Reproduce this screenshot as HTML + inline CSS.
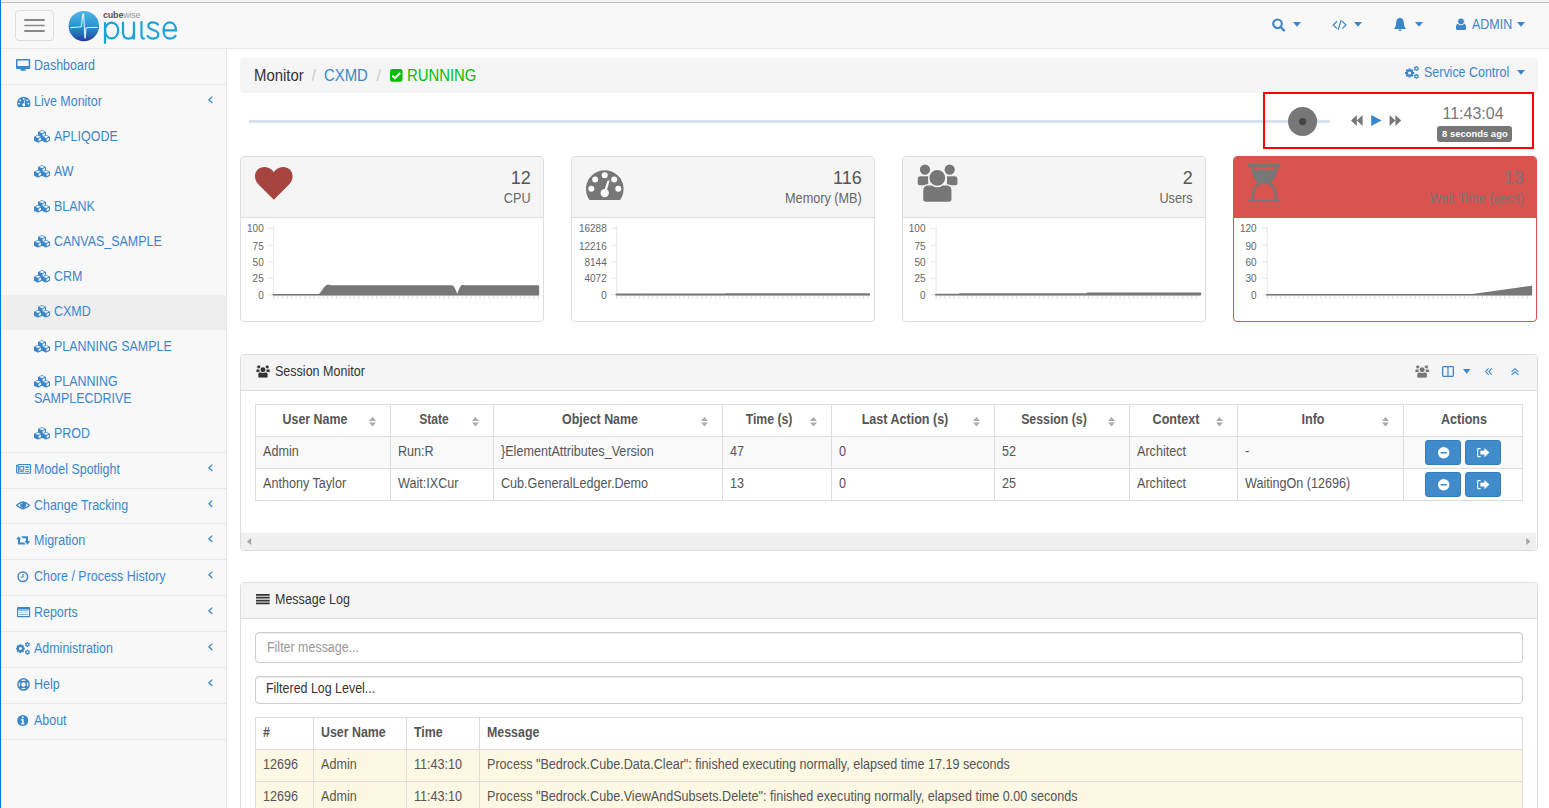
<!DOCTYPE html>
<html><head><meta charset="utf-8">
<style>
*{box-sizing:border-box}
html,body{margin:0;padding:0}
body{width:1549px;height:808px;overflow:hidden;position:relative;background:#fff;font-family:"Liberation Sans",sans-serif;font-size:14px;color:#333}
.a{position:absolute}
.t{position:absolute;white-space:nowrap;line-height:20px;transform-origin:0 50%}
.tr{transform-origin:100% 50%}
.tc{transform-origin:50% 50%}
svg{display:block;position:absolute;overflow:visible}
.s89{transform:scaleX(.89)}
.s93{transform:scaleX(.93)}
#hdr{left:0;top:0;width:1549px;height:49px;background:#f8f8f8;border-bottom:1px solid #e7e7e7}
#line0{left:0;top:0;width:1549px;height:1px;background:#f0f0f0}
#line2{left:0;top:2px;width:1549px;height:1px;background:#b9b9b9}
#line3{left:0;top:3px;width:1549px;height:1px;background:#fdfdfd}
#blue{left:0;top:0;width:1px;height:808px;background:#0078d7;z-index:10}
#burger{left:15px;top:10px;width:39px;height:31px;border:1px solid #ddd;border-radius:4px}
#burger i{position:absolute;left:7px;width:20px;height:2px;background:#888;border-radius:1px}
.bl{color:#3b86c8}
</style></head>
<body>
<div class="a" id="hdr"></div>
<div class="a" id="line0"></div>
<div class="a" id="line2"></div>
<div class="a" id="line3"></div>
<div class="a" id="blue"></div>
<div class="a" id="burger"></div><svg style="left:23.5px;top:18px" width="21" height="15" viewBox="0 0 21 15"><path d="M1,2 H20 M1,13 H20" stroke="#888" stroke-width="2" stroke-linecap="round" fill="none"/><path d="M1,7.5 H20" stroke="#888" stroke-width="1.6" stroke-linecap="round" fill="none"/></svg>

<!-- logo -->
<svg style="left:68px;top:10px" width="32" height="32" viewBox="0 0 32 32">
<defs><linearGradient id="lg" x1="0" y1="0" x2="0" y2="1">
<stop offset="0" stop-color="#52b6e6"/><stop offset=".45" stop-color="#2a9ad6"/><stop offset=".75" stop-color="#2470b8"/><stop offset="1" stop-color="#24399a"/></linearGradient></defs>
<circle cx="15.8" cy="16.1" r="15.2" fill="url(#lg)"/>
<path d="M2.3,17.6 C6,17.6 10,17.4 13.2,16.8 L15,3.8 L15.6,3.8 L16.3,16 L16.8,28 L17.3,28 L17.9,18.2 C19,16.9 22,17.8 29.5,17.4" fill="none" stroke="#fff" stroke-width="1.1" stroke-linejoin="round" opacity=".85"/>
</svg>
<div class="t" style="left:103px;top:8.5px;font-size:9px;line-height:12px;letter-spacing:-.2px"><b style="color:#555">cube</b><span style="color:#999">wise</span></div>
<svg style="left:100px;top:18px" width="82" height="28" viewBox="0 0 82 28">
<g fill="none" stroke="#1ba2da" stroke-width="2.2" stroke-linecap="round">
<path d="M5,5 L5,25"/>
<ellipse cx="11.6" cy="12.5" rx="6.6" ry="7.9"/>
<path d="M23,4.6 L23,14 C23,18.5 25.5,20.6 28.5,20.6 C31.5,20.6 34,18.5 34,14 L34,4.6 M34,14 L34,20.6"/>
<path d="M41.5,4 L41.5,17.5 C41.5,19.8 42.4,20.6 44,20.6"/>
<path d="M58,6.5 C56.8,5 55,4.4 53,4.4 C50,4.4 48.3,6 48.3,8 C48.3,13 58.3,11 58.3,16.3 C58.3,19 56,20.6 53,20.6 C50.5,20.6 48.6,19.6 47.6,18"/>
<path d="M63.6,12.4 L76,12.4 C76,7.5 73.5,4.4 69.8,4.4 C66,4.4 63.5,7.8 63.5,12.5 C63.5,17.5 66,20.6 70,20.6 C72.5,20.6 74.2,19.5 75.5,18"/>
</g></svg>

<!-- header right -->
<svg style="left:1271px;top:18px" width="15" height="14" viewBox="0 0 15 14"><circle cx="6.5" cy="5.8" r="4.3" fill="none" stroke="#3b86c8" stroke-width="2.1"/><path d="M9.6,9 L13,12.4" stroke="#3b86c8" stroke-width="2.3" stroke-linecap="round"/></svg>
<svg style="left:1293px;top:22px" width="8" height="5" viewBox="0 0 8 5"><path d="M0,0H8L4,4.8Z" fill="#3b86c8"/></svg>
<svg style="left:1332px;top:20px" width="15" height="10" viewBox="0 0 15 10"><path d="M5,1.3 L1.2,5 L5,8.6 M10.2,1.3 L14,5 L10.2,8.6 M9.2,0 L6.2,9.7" fill="none" stroke="#3b86c8" stroke-width="1.2"/></svg>
<svg style="left:1354px;top:22px" width="8" height="5" viewBox="0 0 8 5"><path d="M0,0H8L4,4.8Z" fill="#3b86c8"/></svg>
<svg style="left:1393px;top:17px" width="14" height="15" viewBox="0 0 14 15"><path d="M7,0.8 C4.6,1.2 3.2,3 3.2,5.6 C3.2,8.8 2.2,10.6 0.8,11.9 L13.2,11.9 C11.8,10.6 10.8,8.8 10.8,5.6 C10.8,3 9.4,1.2 7,0.8Z" fill="#3b86c8"/><path d="M5.4,12.5 a1.6,1.6 0 0 0 3.2,0Z" fill="#3b86c8"/></svg>
<svg style="left:1415px;top:22px" width="8" height="5" viewBox="0 0 8 5"><path d="M0,0H8L4,4.8Z" fill="#3b86c8"/></svg>
<svg style="left:1455px;top:18px" width="12" height="13" viewBox="0 0 12 13"><path d="M1,8.2 Q1,5.9 3,5.9 H9 Q11,5.9 11,8.2 V10.6 Q11,11.9 9.7,11.9 H2.3 Q1,11.9 1,10.6Z" fill="#3b86c8"/><circle cx="6" cy="3.4" r="3.5" fill="#3b86c8" stroke="#f8f8f8" stroke-width="1"/></svg>
<div class="t bl s89" style="left:1472px;top:14px">ADMIN</div>
<svg style="left:1517px;top:22px" width="8" height="5" viewBox="0 0 8 5"><path d="M0,0H8L4,4.8Z" fill="#3b86c8"/></svg>

<!--SIDEBAR-->
<div class="a" style="left:1px;top:49px;width:226px;height:759px;background:#f8f8f8;border-right:1px solid #e7e7e7"></div>
<div class="a" style="left:1px;top:84px;width:225px;height:1px;background:#e7e7e7"></div>
<div class="a" style="left:1px;top:452px;width:225px;height:1px;background:#e7e7e7"></div>
<div class="a" style="left:1px;top:488px;width:225px;height:1px;background:#e7e7e7"></div>
<div class="a" style="left:1px;top:523px;width:225px;height:1px;background:#e7e7e7"></div>
<div class="a" style="left:1px;top:559px;width:225px;height:1px;background:#e7e7e7"></div>
<div class="a" style="left:1px;top:595px;width:225px;height:1px;background:#e7e7e7"></div>
<div class="a" style="left:1px;top:631px;width:225px;height:1px;background:#e7e7e7"></div>
<div class="a" style="left:1px;top:667px;width:225px;height:1px;background:#e7e7e7"></div>
<div class="a" style="left:1px;top:703px;width:225px;height:1px;background:#e7e7e7"></div>
<div class="a" style="left:1px;top:739px;width:225px;height:1px;background:#e7e7e7"></div>
<div class="a" style="left:1px;top:295px;width:225px;height:35px;background:#eee"></div>
<svg width="0" height="0" style="position:absolute"><defs>
<symbol id="cube" viewBox="0 0 8 8"><path d="M0,2 L4,0 L8,2 L8,6 L4,8 L0,6Z" fill="#3b86c8"/><path d="M1.3,2 L4,0.8 L6.7,2 L4,3.2Z M4.6,4 L7,3 L7,5.4 L4.6,6.6Z" fill="#fff" opacity=".9"/></symbol>
<symbol id="cubes" viewBox="0 0 16 13"><use href="#cube" x="4" y="0" width="8" height="8"/><use href="#cube" x="0" y="4.7" width="8" height="8"/><use href="#cube" x="8" y="4.7" width="8" height="8"/></symbol>
<symbol id="chev" viewBox="0 0 5 8"><path d="M4.3,0.6 L0.9,3.8 L4.3,7" fill="none" stroke="#3b86c8" stroke-width="1.25"/></symbol>
</defs></svg>
<svg style="left:15.8px;top:59px" width="14.2" height="12" viewBox="0 0 14.2 12"><path d="M1,0 H13.2 Q14.2,0 14.2,1 V9 Q14.2,10 13.2,10 H1 Q0,10 0,9 V1 Q0,0 1,0Z M1.5,1.5 V7 H12.7 V1.5Z" fill="#3b86c8" fill-rule="evenodd"/><path d="M4.8,10 H9.4 L9.8,11.8 H4.4Z" fill="#3b86c8"/></svg>
<div class="t bl s89" style="left:34px;top:55px">Dashboard</div>
<svg style="left:16.5px;top:97px" width="13.5" height="10" viewBox="0 0 13.5 10"><path d="M1,10 A6.75,6.75 0 1 1 12.5,10Z" fill="#3b86c8"/><g fill="#fff"><circle cx="6.75" cy="1.9" r=".9"/><circle cx="3.3" cy="3.3" r=".9"/><circle cx="10.2" cy="3.3" r=".9"/><circle cx="2" cy="6.6" r=".9"/><circle cx="11.5" cy="6.6" r=".9"/><circle cx="6.75" cy="8" r="1.4"/><path d="M6.2,8 L7.5,3 L8,3.1 L7.3,8Z"/></g></svg>
<div class="t bl s89" style="left:34px;top:91px">Live Monitor</div>
<svg style="left:208px;top:95.5px" width="5" height="8"><use href="#chev"/></svg>
<svg style="left:34.3px;top:130px" width="16" height="13"><use href="#cubes"/></svg>
<div class="t bl s89" style="left:54px;top:126px">APLIQODE</div>
<svg style="left:34.3px;top:165px" width="16" height="13"><use href="#cubes"/></svg>
<div class="t bl s89" style="left:54px;top:161px">AW</div>
<svg style="left:34.3px;top:200px" width="16" height="13"><use href="#cubes"/></svg>
<div class="t bl s89" style="left:54px;top:196px">BLANK</div>
<svg style="left:34.3px;top:235px" width="16" height="13"><use href="#cubes"/></svg>
<div class="t bl s89" style="left:54px;top:231px">CANVAS_SAMPLE</div>
<svg style="left:34.3px;top:270px" width="16" height="13"><use href="#cubes"/></svg>
<div class="t bl s89" style="left:54px;top:266px">CRM</div>
<svg style="left:34.3px;top:305px" width="16" height="13"><use href="#cubes"/></svg>
<div class="t bl s89" style="left:54px;top:301px">CXMD</div>
<svg style="left:34.3px;top:340px" width="16" height="13"><use href="#cubes"/></svg>
<div class="t bl s89" style="left:54px;top:336px">PLANNING SAMPLE</div>
<svg style="left:34.3px;top:375px" width="16" height="13"><use href="#cubes"/></svg>
<div class="t bl s89" style="left:54px;top:371px">PLANNING</div>
<svg style="left:34.3px;top:427px" width="16" height="13"><use href="#cubes"/></svg>
<div class="t bl s89" style="left:54px;top:423px">PROD</div>
<div class="t bl s89" style="left:34px;top:388px">SAMPLECDRIVE</div>
<svg style="left:15.8px;top:463.9px" width="15" height="10" viewBox="0 0 15 10"><g fill="none" stroke="#3b86c8" stroke-width="1.1"><path d="M2.35,9.25 H13.9 Q14.4,9.25 14.4,8.75 V1.05 Q14.4,.55 13.9,.55 H2.35 V9.25 Q.55,9.25 .55,8.5 V1.6 H2.35"/><rect x="3.85" y="2.65" width="3.9" height="3.3"/></g><path d="M9.3,2.3 H13.1 V3.9 H9.3Z M9.3,4.9 H13.1 V5.9 H9.3Z M3.5,6.9 H7.8 V7.9 H3.5Z M9.3,6.9 H13.1 V7.9 H9.3Z" fill="#3b86c8" opacity=".85"/></svg>
<div class="t bl s89" style="left:34px;top:459px">Model Spotlight</div>
<svg style="left:208px;top:463.5px" width="5" height="8"><use href="#chev"/></svg>
<svg style="left:16px;top:501.3px" width="14" height="8.6" viewBox="0 0 14 8.6"><path d="M.7,4.3 Q7,-2.6 13.3,4.3 Q7,11.2 .7,4.3Z" fill="none" stroke="#3b86c8" stroke-width="1.3"/><circle cx="7.1" cy="3.8" r="3.1" fill="#3b86c8"/><path d="M5.2,3.4 Q5.4,2.2 6.4,1.9" stroke="#fff" stroke-width=".8" fill="none" opacity=".8"/></svg>
<div class="t bl s89" style="left:34px;top:495px">Change Tracking</div>
<svg style="left:208px;top:499.5px" width="5" height="8"><use href="#chev"/></svg>
<svg style="left:15.9px;top:536.3px" width="14.2" height="8.8" viewBox="0 0 14.2 8.8"><path d="M.1,3.3 L2.75,.4 L5.3,3.3 H4 V6.6 H8.2 L9.6,8.6 H2 V3.3Z M5.2,.3 H12 V5.1 H14.1 L11.4,8.7 L8.6,5.1 H10 V2.3 H6.8Z" fill="#3b86c8"/></svg>
<div class="t bl s89" style="left:34px;top:530px">Migration</div>
<svg style="left:208px;top:534.5px" width="5" height="8"><use href="#chev"/></svg>
<svg style="left:17.4px;top:570.6px" width="11.6" height="11.6" viewBox="0 0 11.6 11.6"><circle cx="5.85" cy="5.75" r="4.8" fill="none" stroke="#3b86c8" stroke-width="1.5"/><path d="M6.05,3.1 V6.05 H3.6" fill="none" stroke="#3b86c8" stroke-width="1.1"/></svg>
<div class="t bl s89" style="left:34px;top:566px">Chore / Process History</div>
<svg style="left:208px;top:570.5px" width="5" height="8"><use href="#chev"/></svg>
<svg style="left:16.6px;top:607px" width="13.2" height="10.2" viewBox="0 0 13.2 10.2"><path d="M.9,0 H12.3 Q13.2,0 13.2,.9 V9.3 Q13.2,10.2 12.3,10.2 H.9 Q0,10.2 0,9.3 V.9 Q0,0 .9,0Z M1.1,2.5 V9.1 H12.1 V2.5Z" fill="#3b86c8" fill-rule="evenodd"/><path d="M1.7,3.1 H11.4 V3.9 H1.7Z M1.7,4.9 H11.4 V5.6 H1.7Z M1.7,7.1 H11.4 V7.9 H1.7Z" fill="#3b86c8" opacity=".6"/></svg>
<div class="t bl s89" style="left:34px;top:602px">Reports</div>
<svg style="left:208px;top:606.5px" width="5" height="8"><use href="#chev"/></svg>
<svg style="left:16px;top:642px" width="14" height="13" viewBox="0 0 14 13"><path d="M3.42,3.19 L3.44,2.20 L5.36,2.20 L5.38,3.19 L6.12,3.50 L6.83,2.81 L8.19,4.17 L7.50,4.88 L7.81,5.62 L8.80,5.64 L8.80,7.56 L7.81,7.58 L7.50,8.32 L8.19,9.03 L6.83,10.39 L6.12,9.70 L5.38,10.01 L5.36,11.00 L3.44,11.00 L3.42,10.01 L2.68,9.70 L1.97,10.39 L0.61,9.03 L1.30,8.32 L0.99,7.58 L0.00,7.56 L0.00,5.64 L0.99,5.62 L1.30,4.88 L0.61,4.17 L1.97,2.81 L2.68,3.50Z M5.90,6.6 A1.5,1.5 0 1 0 2.90,6.6 A1.5,1.5 0 1 0 5.90,6.6Z M10.69,0.78 L10.66,0.11 L12.14,0.11 L12.11,0.78 L12.62,1.08 L13.19,0.71 L13.93,1.99 L13.33,2.31 L13.33,2.89 L13.93,3.21 L13.19,4.49 L12.62,4.12 L12.11,4.42 L12.14,5.09 L10.66,5.09 L10.69,4.42 L10.18,4.12 L9.61,4.49 L8.87,3.21 L9.47,2.89 L9.47,2.31 L8.87,1.99 L9.61,0.71 L10.18,1.08Z M12.30,2.6 A0.9,0.9 0 1 0 10.50,2.6 A0.9,0.9 0 1 0 12.30,2.6Z M10.69,8.38 L10.66,7.71 L12.14,7.71 L12.11,8.38 L12.62,8.68 L13.19,8.31 L13.93,9.59 L13.33,9.91 L13.33,10.49 L13.93,10.81 L13.19,12.09 L12.62,11.72 L12.11,12.02 L12.14,12.69 L10.66,12.69 L10.69,12.02 L10.18,11.72 L9.61,12.09 L8.87,10.81 L9.47,10.49 L9.47,9.91 L8.87,9.59 L9.61,8.31 L10.18,8.68Z M12.30,10.2 A0.9,0.9 0 1 0 10.50,10.2 A0.9,0.9 0 1 0 12.30,10.2Z" fill="#3b86c8" fill-rule="evenodd"/></svg>
<div class="t bl s89" style="left:34px;top:638px">Administration</div>
<svg style="left:208px;top:642.5px" width="5" height="8"><use href="#chev"/></svg>
<svg style="left:16.7px;top:678px" width="13" height="12.8" viewBox="0 0 13 12.8"><circle cx="6.5" cy="6.4" r="5.6" fill="none" stroke="#3b86c8" stroke-width="1.5"/><circle cx="6.5" cy="6.4" r="2.9" fill="none" stroke="#3b86c8" stroke-width="1.3"/><path d="M2.5,2.4 L4.6,4.5 M10.5,2.4 L8.4,4.5 M2.5,10.4 L4.6,8.3 M10.5,10.4 L8.4,8.3" stroke="#3b86c8" stroke-width="2.8"/></svg>
<div class="t bl s89" style="left:34px;top:674px">Help</div>
<svg style="left:208px;top:678.5px" width="5" height="8"><use href="#chev"/></svg>
<svg style="left:17.4px;top:715px" width="11.5" height="11" viewBox="0 0 11.5 11"><circle cx="5.75" cy="5.5" r="5.5" fill="#3b86c8"/><path d="M4.8,1.6 H6.6 V3.1 H4.8Z M4.2,4 H6.6 V7.9 H7.3 V9.4 H4.2 V7.9 H4.9 V5.4 H4.2Z" fill="#fff"/></svg>
<div class="t bl s89" style="left:34px;top:710px">About</div>
<!-- breadcrumb -->
<div class="a" style="left:240px;top:58px;width:1297.5px;height:35px;background:#f5f5f5;border-radius:4px"></div>
<div class="t s93" style="left:254px;top:66px;font-size:16px;color:#333">Monitor</div>
<div class="t" style="left:311.5px;top:66px;font-size:16px;color:#ccc">/</div>
<div class="t bl s93" style="left:324px;top:66px;font-size:16px">CXMD</div>
<div class="t" style="left:376.5px;top:66px;font-size:16px;color:#ccc">/</div>
<svg style="left:389.8px;top:69px" width="12.5" height="12.8" viewBox="0 0 12.5 12.8"><rect x="0" y="0" width="12.5" height="12.8" rx="2.2" fill="#00bf00"/><path d="M2.3,6.6 L5,9.2 L10.2,4" fill="none" stroke="#fff" stroke-width="2"/></svg>
<div class="t s93" style="left:407px;top:66px;font-size:16px;color:#00bf00">RUNNING</div>
<svg style="left:1405.2px;top:65.7px" width="14" height="13" viewBox="0 0 14 13"><path d="M3.58,3.44 L3.59,2.41 L5.61,2.41 L5.62,3.44 L6.40,3.76 L7.13,3.04 L8.56,4.47 L7.84,5.20 L8.16,5.98 L9.19,5.99 L9.19,8.01 L8.16,8.02 L7.84,8.80 L8.56,9.53 L7.13,10.96 L6.40,10.24 L5.62,10.56 L5.61,11.59 L3.59,11.59 L3.58,10.56 L2.80,10.24 L2.07,10.96 L0.64,9.53 L1.36,8.80 L1.04,8.02 L0.01,8.01 L0.01,5.99 L1.04,5.98 L1.36,5.20 L0.64,4.47 L2.07,3.04 L2.80,3.76Z M6.15,7.0 A1.55,1.55 0 1 0 3.05,7.0 A1.55,1.55 0 1 0 6.15,7.0Z M10.69,0.68 L10.66,0.01 L12.14,0.01 L12.11,0.68 L12.62,0.98 L13.19,0.61 L13.93,1.89 L13.33,2.21 L13.33,2.79 L13.93,3.11 L13.19,4.39 L12.62,4.02 L12.11,4.32 L12.14,4.99 L10.66,4.99 L10.69,4.32 L10.18,4.02 L9.61,4.39 L8.87,3.11 L9.47,2.79 L9.47,2.21 L8.87,1.89 L9.61,0.61 L10.18,0.98Z M12.30,2.5 A0.9,0.9 0 1 0 10.50,2.5 A0.9,0.9 0 1 0 12.30,2.5Z M10.69,8.48 L10.66,7.81 L12.14,7.81 L12.11,8.48 L12.62,8.78 L13.19,8.41 L13.93,9.69 L13.33,10.01 L13.33,10.59 L13.93,10.91 L13.19,12.19 L12.62,11.82 L12.11,12.12 L12.14,12.79 L10.66,12.79 L10.69,12.12 L10.18,11.82 L9.61,12.19 L8.87,10.91 L9.47,10.59 L9.47,10.01 L8.87,9.69 L9.61,8.41 L10.18,8.78Z M12.30,10.3 A0.9,0.9 0 1 0 10.50,10.3 A0.9,0.9 0 1 0 12.30,10.3Z" fill="#3b86c8" fill-rule="evenodd"/></svg>
<div class="t bl s89" style="left:1424px;top:62px">Service Control</div>
<svg style="left:1517px;top:70px" width="8" height="5" viewBox="0 0 8 5"><path d="M0,0H8L4,4.8Z" fill="#3b86c8"/></svg>
<!-- slider -->
<div class="a" style="left:249px;top:120px;width:1081px;height:3px;background:#d8e1f2"></div>
<div class="a" style="left:1263px;top:92px;width:271px;height:57px;border:2px solid #f00"></div>
<svg style="left:1288px;top:106.75px" width="29.1" height="29.1" viewBox="0 0 29.1 29.1"><circle cx="14.55" cy="14.55" r="14.55" fill="#777"/><circle cx="14.55" cy="14.6" r="3.6" fill="#444"/></svg>
<svg style="left:1350.5px;top:114.9px" width="51" height="11" viewBox="0 0 51 11"><path d="M0,5.5 L5.8,0 V11Z M5.8,5.5 L11.6,0 V11Z M44.4,5.5 L38.6,0 V11Z M50.2,5.5 L44.4,0 V11Z" fill="#777"/><path d="M20.2,0 L30.6,5.5 L20.2,11Z" fill="#3b86c8"/></svg>
<div class="t" style="left:1442.5px;top:104px;font-size:16px;color:#777">11:43:04</div>
<div class="a" style="left:1437px;top:126px;width:75px;height:16px;background:#777;border-radius:3px"></div>
<div class="t" style="left:1441.7px;top:123.6px;font-size:9.8px;font-weight:bold;color:#fff;transform:scaleX(.965)">8 seconds ago</div>
<div class="a" style="left:240px;top:156px;width:304px;height:166px;border:1px solid #ddd;border-radius:4px;background:#fff;overflow:hidden"><div class="a" style="left:0;top:0;width:302px;height:61px;background:#f5f5f5;border-bottom:1px solid #ddd"></div></div>
<svg style="left:255px;top:167px" width="37.6" height="32.8" viewBox="0 0 37.6 32.8"><path d="M18.8,32.8 L4,18 C1,15 0,12 0,9.3 C0,3.8 4,0 9.6,0 C13.6,0 16.6,2.2 18.8,4.9 C21,2.2 24,0 28,0 C33.6,0 37.6,3.8 37.6,9.3 C37.6,12 36.6,15 33.6,18 Z" fill="#a64440"/></svg>
<div class="t tr" style="right:1018.3px;top:167.7px;font-size:18px;color:#555;transform:scaleX(1);">12</div>
<div class="t tr" style="right:1018.3px;top:187.8px;font-size:14px;color:#666;transform:scaleX(0.905);">CPU</div>
<div class="t tr" style="right:1285.3px;top:219.4px;font-size:10px;color:#666">100</div>
<div class="t tr" style="right:1285.3px;top:236.6px;font-size:10px;color:#666">75</div>
<div class="t tr" style="right:1285.3px;top:252.9px;font-size:10px;color:#666">50</div>
<div class="t tr" style="right:1285.3px;top:269.3px;font-size:10px;color:#666">25</div>
<div class="t tr" style="right:1285.3px;top:286.1px;font-size:10px;color:#666">0</div>
<svg style="left:240px;top:220px" width="304" height="85" viewBox="240 220 304 85"><path d="M273.7,226 V299 M268.2,228.3 H273.2 M268.2,245.3 H273.2 M268.2,261.8 H273.2 M268.2,278.3 H273.2 M268.2,294.8 H273.2 M273.2,295.3 H538.4" stroke="#e6e6e6" stroke-width="1" fill="none"/><path d="M273.70,295.5 V299 M278.19,295.5 V299 M282.67,295.5 V299 M287.16,295.5 V299 M291.64,295.5 V299 M296.13,295.5 V299 M300.61,295.5 V299 M305.10,295.5 V299 M309.58,295.5 V299 M314.07,295.5 V299 M318.55,295.5 V299 M323.04,295.5 V299 M327.52,295.5 V299 M332.01,295.5 V299 M336.49,295.5 V299 M340.98,295.5 V299 M345.46,295.5 V299 M349.95,295.5 V299 M354.43,295.5 V299 M358.92,295.5 V299 M363.40,295.5 V299 M367.89,295.5 V299 M372.37,295.5 V299 M376.86,295.5 V299 M381.34,295.5 V299 M385.83,295.5 V299 M390.31,295.5 V299 M394.80,295.5 V299 M399.28,295.5 V299 M403.77,295.5 V299 M408.25,295.5 V299 M412.74,295.5 V299 M417.22,295.5 V299 M421.71,295.5 V299 M426.19,295.5 V299 M430.68,295.5 V299 M435.16,295.5 V299 M439.65,295.5 V299 M444.13,295.5 V299 M448.62,295.5 V299 M453.10,295.5 V299 M457.59,295.5 V299 M462.07,295.5 V299 M466.56,295.5 V299 M471.04,295.5 V299 M475.53,295.5 V299 M480.01,295.5 V299 M484.50,295.5 V299 M488.98,295.5 V299 M493.47,295.5 V299 M497.95,295.5 V299 M502.44,295.5 V299 M506.92,295.5 V299 M511.41,295.5 V299 M515.89,295.5 V299 M520.38,295.5 V299 M524.86,295.5 V299 M529.35,295.5 V299 M533.83,295.5 V299 M538.32,295.5 V299" stroke="#e2e2e2" stroke-width="1" fill="none"/><path d="M273.2,294.8 L318.4,294.8 C322,294.8 324,285.5 328,285.3 L331,286 L452,286 C454.5,286 456,294.8 457.2,294.8 C458.5,294.8 460,286 462.5,285.6 L464.5,286 L538.4,286 L538.4,294.8Z" fill="#777" stroke="#777" stroke-width="1.5" stroke-linejoin="round"/></svg>
<div class="a" style="left:571px;top:156px;width:304px;height:166px;border:1px solid #ddd;border-radius:4px;background:#fff;overflow:hidden"><div class="a" style="left:0;top:0;width:302px;height:61px;background:#f5f5f5;border-bottom:1px solid #ddd"></div></div>
<svg style="left:586.1px;top:169.9px" width="37.6" height="30" viewBox="0 0 37.6 30"><path d="M3.5,29.9 A18.8,18.8 0 1 1 34.1,29.9Z" fill="#777"/><g fill="#fff"><circle cx="18.7" cy="5.3" r="3"/><circle cx="9.2" cy="9.4" r="3"/><circle cx="28.2" cy="9.4" r="3"/><circle cx="5.3" cy="18.8" r="3"/><circle cx="32.3" cy="18.8" r="3"/><circle cx="18.7" cy="23.1" r="4.2"/><path d="M17.4,23 L21.6,10.4 L23.6,10.6 L20.2,23Z"/></g></svg>
<div class="t tr" style="right:687.3px;top:167.7px;font-size:18px;color:#555;transform:scaleX(1);">116</div>
<div class="t tr" style="right:687.3px;top:187.8px;font-size:14px;color:#666;transform:scaleX(0.905);">Memory (MB)</div>
<div class="t tr" style="right:942.3px;top:219.4px;font-size:10px;color:#666">16288</div>
<div class="t tr" style="right:942.3px;top:236.6px;font-size:10px;color:#666">12216</div>
<div class="t tr" style="right:942.3px;top:252.9px;font-size:10px;color:#666">8144</div>
<div class="t tr" style="right:942.3px;top:269.3px;font-size:10px;color:#666">4072</div>
<div class="t tr" style="right:942.3px;top:286.1px;font-size:10px;color:#666">0</div>
<svg style="left:571px;top:220px" width="304" height="85" viewBox="571 220 304 85"><path d="M616.8,226 V299 M611.3,228.3 H616.3 M611.3,245.3 H616.3 M611.3,261.8 H616.3 M611.3,278.3 H616.3 M611.3,294.8 H616.3 M616.3,295.3 H869.4" stroke="#e6e6e6" stroke-width="1" fill="none"/><path d="M616.80,295.5 V299 M621.28,295.5 V299 M625.77,295.5 V299 M630.25,295.5 V299 M634.74,295.5 V299 M639.23,295.5 V299 M643.71,295.5 V299 M648.20,295.5 V299 M652.68,295.5 V299 M657.17,295.5 V299 M661.65,295.5 V299 M666.14,295.5 V299 M670.62,295.5 V299 M675.11,295.5 V299 M679.59,295.5 V299 M684.08,295.5 V299 M688.56,295.5 V299 M693.05,295.5 V299 M697.53,295.5 V299 M702.02,295.5 V299 M706.50,295.5 V299 M710.99,295.5 V299 M715.47,295.5 V299 M719.96,295.5 V299 M724.44,295.5 V299 M728.93,295.5 V299 M733.41,295.5 V299 M737.90,295.5 V299 M742.38,295.5 V299 M746.87,295.5 V299 M751.35,295.5 V299 M755.84,295.5 V299 M760.32,295.5 V299 M764.81,295.5 V299 M769.29,295.5 V299 M773.78,295.5 V299 M778.26,295.5 V299 M782.75,295.5 V299 M787.23,295.5 V299 M791.72,295.5 V299 M796.20,295.5 V299 M800.69,295.5 V299 M805.17,295.5 V299 M809.66,295.5 V299 M814.14,295.5 V299 M818.63,295.5 V299 M823.11,295.5 V299 M827.60,295.5 V299 M832.08,295.5 V299 M836.57,295.5 V299 M841.05,295.5 V299 M845.54,295.5 V299 M850.02,295.5 V299 M854.51,295.5 V299 M858.99,295.5 V299 M863.48,295.5 V299 M867.96,295.5 V299" stroke="#e2e2e2" stroke-width="1" fill="none"/><path d="M616.3,294.8 L616.3,294.2 L725,294.2 L726,293.90000000000003 L869.4,293.90000000000003 L869.4,294.8Z" fill="#777" stroke="#777" stroke-width="1.5" stroke-linejoin="round"/></svg>
<div class="a" style="left:902px;top:156px;width:304px;height:166px;border:1px solid #ddd;border-radius:4px;background:#fff;overflow:hidden"><div class="a" style="left:0;top:0;width:302px;height:61px;background:#f5f5f5;border-bottom:1px solid #ddd"></div></div>
<svg style="left:916.9px;top:163.9px" width="41.2" height="38.4" viewBox="0 0 41.2 38.4"><g fill="#777" stroke="#f5f5f5" stroke-width="1.5"><path d="M0,15.5 Q0,11.6 3.5,11.6 H12 V22 H2.5 Q0,22 0,19.5Z"/><path d="M41.2,15.5 Q41.2,11.6 37.7,11.6 H29.2 V22 H38.7 Q41.2,22 41.2,19.5Z"/><circle cx="8" cy="5.6" r="5.9"/><circle cx="32.7" cy="5.6" r="5.9"/><path d="M5.5,26.5 Q5.5,20.7 11.5,20.7 H29.2 Q35.2,20.7 35.2,26.5 V35 Q35.2,38.4 31.8,38.4 H8.9 Q5.5,38.4 5.5,35Z"/><circle cx="20.3" cy="13.9" r="8.6"/></g></svg>
<div class="t tr" style="right:356.3px;top:167.7px;font-size:18px;color:#555;transform:scaleX(1);">2</div>
<div class="t tr" style="right:356.3px;top:187.8px;font-size:14px;color:#666;transform:scaleX(0.905);">Users</div>
<div class="t tr" style="right:623.5px;top:219.4px;font-size:10px;color:#666">100</div>
<div class="t tr" style="right:623.5px;top:236.6px;font-size:10px;color:#666">75</div>
<div class="t tr" style="right:623.5px;top:252.9px;font-size:10px;color:#666">50</div>
<div class="t tr" style="right:623.5px;top:269.3px;font-size:10px;color:#666">25</div>
<div class="t tr" style="right:623.5px;top:286.1px;font-size:10px;color:#666">0</div>
<svg style="left:902px;top:220px" width="304" height="85" viewBox="902 220 304 85"><path d="M936.1,226 V299 M930.6,228.3 H935.6 M930.6,245.3 H935.6 M930.6,261.8 H935.6 M930.6,278.3 H935.6 M930.6,294.8 H935.6 M935.6,295.3 H1200.4" stroke="#e6e6e6" stroke-width="1" fill="none"/><path d="M936.10,295.5 V299 M940.59,295.5 V299 M945.07,295.5 V299 M949.56,295.5 V299 M954.04,295.5 V299 M958.53,295.5 V299 M963.01,295.5 V299 M967.50,295.5 V299 M971.98,295.5 V299 M976.47,295.5 V299 M980.95,295.5 V299 M985.44,295.5 V299 M989.92,295.5 V299 M994.41,295.5 V299 M998.89,295.5 V299 M1003.38,295.5 V299 M1007.86,295.5 V299 M1012.35,295.5 V299 M1016.83,295.5 V299 M1021.32,295.5 V299 M1025.80,295.5 V299 M1030.29,295.5 V299 M1034.77,295.5 V299 M1039.25,295.5 V299 M1043.74,295.5 V299 M1048.22,295.5 V299 M1052.71,295.5 V299 M1057.19,295.5 V299 M1061.68,295.5 V299 M1066.16,295.5 V299 M1070.65,295.5 V299 M1075.13,295.5 V299 M1079.62,295.5 V299 M1084.10,295.5 V299 M1088.59,295.5 V299 M1093.07,295.5 V299 M1097.56,295.5 V299 M1102.04,295.5 V299 M1106.53,295.5 V299 M1111.01,295.5 V299 M1115.50,295.5 V299 M1119.98,295.5 V299 M1124.47,295.5 V299 M1128.95,295.5 V299 M1133.44,295.5 V299 M1137.92,295.5 V299 M1142.41,295.5 V299 M1146.89,295.5 V299 M1151.38,295.5 V299 M1155.86,295.5 V299 M1160.35,295.5 V299 M1164.83,295.5 V299 M1169.32,295.5 V299 M1173.80,295.5 V299 M1178.29,295.5 V299 M1182.77,295.5 V299 M1187.26,295.5 V299 M1191.74,295.5 V299 M1196.23,295.5 V299" stroke="#e2e2e2" stroke-width="1" fill="none"/><path d="M935.6,294.8 L935.6,294.6 L958,294.6 L960,294.0 L1086,294.0 L1088,293.2 L1200.4,293.2 L1200.4,294.8Z" fill="#777" stroke="#777" stroke-width="1.5" stroke-linejoin="round"/></svg>
<div class="a" style="left:1233px;top:156px;width:304px;height:166px;border:1px solid #d9534f;border-radius:4px;background:#fff;overflow:hidden"><div class="a" style="left:0;top:0;width:302px;height:61px;background:#d9534f;border-bottom:1px solid #d9534f"></div></div>
<svg style="left:1248px;top:164.2px" width="32.5" height="37.8" viewBox="0 0 32.5 37.8"><g fill="#777"><rect x="0" y="0" width="32.5" height="2.7"/><rect x="0" y="35.9" width="32.5" height="1.9"/><path d="M3.1,2.5 H29.7 C29.7,10 26.5,15.5 22.3,19 L20.8,20.2 H11.7 L10.2,19 C6,15.5 3.1,10 3.1,2.5Z"/></g><rect x="5.6" y="3.1" width="21.3" height="2.6" fill="#d9534f"/><path d="M11.2,19.6 C6.5,22.2 4.3,27.5 4.3,36 M21.3,19.6 C26,22.2 28.2,27.5 28.2,36" fill="none" stroke="#777" stroke-width="2.5"/></svg>
<div class="t tr" style="right:25.3px;top:167.7px;font-size:18px;color:#777;transform:scaleX(1);">13</div>
<div class="t tr" style="right:25.3px;top:187.8px;font-size:14px;color:#777;transform:scaleX(0.905);">Wait Time (secs)</div>
<div class="t tr" style="right:292.4px;top:219.4px;font-size:10px;color:#666">120</div>
<div class="t tr" style="right:292.4px;top:236.6px;font-size:10px;color:#666">90</div>
<div class="t tr" style="right:292.4px;top:252.9px;font-size:10px;color:#666">60</div>
<div class="t tr" style="right:292.4px;top:269.3px;font-size:10px;color:#666">30</div>
<div class="t tr" style="right:292.4px;top:286.1px;font-size:10px;color:#666">0</div>
<svg style="left:1233px;top:220px" width="304" height="85" viewBox="1233 220 304 85"><path d="M1267.2,226 V299 M1261.7,228.3 H1266.7 M1261.7,245.3 H1266.7 M1261.7,261.8 H1266.7 M1261.7,278.3 H1266.7 M1261.7,294.8 H1266.7 M1266.7,295.3 H1531.4" stroke="#e6e6e6" stroke-width="1" fill="none"/><path d="M1267.20,295.5 V299 M1271.68,295.5 V299 M1276.17,295.5 V299 M1280.65,295.5 V299 M1285.14,295.5 V299 M1289.62,295.5 V299 M1294.11,295.5 V299 M1298.59,295.5 V299 M1303.08,295.5 V299 M1307.56,295.5 V299 M1312.05,295.5 V299 M1316.53,295.5 V299 M1321.02,295.5 V299 M1325.50,295.5 V299 M1329.99,295.5 V299 M1334.47,295.5 V299 M1338.96,295.5 V299 M1343.44,295.5 V299 M1347.93,295.5 V299 M1352.41,295.5 V299 M1356.90,295.5 V299 M1361.38,295.5 V299 M1365.87,295.5 V299 M1370.35,295.5 V299 M1374.84,295.5 V299 M1379.32,295.5 V299 M1383.81,295.5 V299 M1388.29,295.5 V299 M1392.78,295.5 V299 M1397.26,295.5 V299 M1401.75,295.5 V299 M1406.23,295.5 V299 M1410.72,295.5 V299 M1415.20,295.5 V299 M1419.69,295.5 V299 M1424.17,295.5 V299 M1428.66,295.5 V299 M1433.14,295.5 V299 M1437.63,295.5 V299 M1442.11,295.5 V299 M1446.60,295.5 V299 M1451.08,295.5 V299 M1455.57,295.5 V299 M1460.05,295.5 V299 M1464.54,295.5 V299 M1469.02,295.5 V299 M1473.51,295.5 V299 M1477.99,295.5 V299 M1482.48,295.5 V299 M1486.96,295.5 V299 M1491.45,295.5 V299 M1495.93,295.5 V299 M1500.42,295.5 V299 M1504.90,295.5 V299 M1509.39,295.5 V299 M1513.87,295.5 V299 M1518.36,295.5 V299 M1522.84,295.5 V299 M1527.33,295.5 V299" stroke="#e2e2e2" stroke-width="1" fill="none"/><path d="M1266.7,294.8 L1472.4,294.8 L1531.4,286.6 L1531.4,294.8Z" fill="#777" stroke="#777" stroke-width="1.5" stroke-linejoin="round"/></svg>
<div class="a" style="left:240px;top:354px;width:1298px;height:197px;border:1px solid #ddd;border-radius:4px;background:#fff;overflow:hidden"><div class="a" style="left:0;top:0;width:1296px;height:36px;background:#f5f5f5;border-bottom:1px solid #ddd"></div><div class="a" style="left:0;top:178px;width:1295px;height:17px;background:#f0f0f0"></div></div>
<svg style="left:246.9px;top:538px" width="4.4" height="7" viewBox="0 0 4.4 7"><path d="M0,3.5 L4.2,0 V7Z" fill="#a3a3a3"/></svg>
<svg style="left:1525.5px;top:538px" width="4.4" height="7" viewBox="0 0 4.4 7"><path d="M4.4,3.5 L0.2,0 V7Z" fill="#a3a3a3"/></svg>
<svg style="left:256.2px;top:364.8px" width="14.1" height="13" viewBox="0 0 41.2 38.4" preserveAspectRatio="none"><g fill="#333" stroke="#f5f5f5" stroke-width="2.6"><path d="M0,15.5 Q0,11.6 3.5,11.6 H12 V22 H2.5 Q0,22 0,19.5Z"/><path d="M41.2,15.5 Q41.2,11.6 37.7,11.6 H29.2 V22 H38.7 Q41.2,22 41.2,19.5Z"/><circle cx="8" cy="5.6" r="5.9"/><circle cx="32.7" cy="5.6" r="5.9"/><path d="M5.5,26.5 Q5.5,20.7 11.5,20.7 H29.2 Q35.2,20.7 35.2,26.5 V35 Q35.2,38.4 31.8,38.4 H8.9 Q5.5,38.4 5.5,35Z"/><circle cx="20.3" cy="13.9" r="8.6"/></g></svg>
<div class="t" style="left:275px;top:361px;font-size:14px;color:#333;transform:scaleX(0.895);transform-origin:0 50%;">Session Monitor</div>
<svg style="left:1415px;top:364.8px" width="14.4" height="13.1" viewBox="0 0 41.2 38.4" preserveAspectRatio="none"><g fill="#777" stroke="#f5f5f5" stroke-width="2.6"><path d="M0,15.5 Q0,11.6 3.5,11.6 H12 V22 H2.5 Q0,22 0,19.5Z"/><path d="M41.2,15.5 Q41.2,11.6 37.7,11.6 H29.2 V22 H38.7 Q41.2,22 41.2,19.5Z"/><circle cx="8" cy="5.6" r="5.9"/><circle cx="32.7" cy="5.6" r="5.9"/><path d="M5.5,26.5 Q5.5,20.7 11.5,20.7 H29.2 Q35.2,20.7 35.2,26.5 V35 Q35.2,38.4 31.8,38.4 H8.9 Q5.5,38.4 5.5,35Z"/><circle cx="20.3" cy="13.9" r="8.6"/></g></svg>
<svg style="left:1441.8px;top:365.8px" width="12" height="11" viewBox="0 0 12 11"><rect x=".65" y=".65" width="10.7" height="9.7" rx=".8" fill="none" stroke="#3b86c8" stroke-width="1.3"/><path d="M6,.6 V10.4" stroke="#3b86c8" stroke-width="1.2"/></svg>
<svg style="left:1462.7px;top:369px" width="7.5" height="4.8" viewBox="0 0 7.5 4.8"><path d="M0,0H7.5L3.75,4.8Z" fill="#3b86c8"/></svg>
<svg style="left:1485px;top:368px" width="7.4" height="7.2" viewBox="0 0 7.4 7.2"><path d="M3.6,.4 L.7,3.6 L3.6,6.8 M6.8,.4 L3.9,3.6 L6.8,6.8" fill="none" stroke="#3b86c8" stroke-width="1.1"/></svg>
<svg style="left:1511.2px;top:367.8px" width="8" height="7.4" viewBox="0 0 8 7.4"><path d="M.6,3.8 L4,.7 L7.4,3.8 M.6,6.9 L4,3.8 L7.4,6.9" fill="none" stroke="#3b86c8" stroke-width="1.1"/></svg>
<div class="a" style="left:255px;top:436px;width:1268px;height:32px;background:#f9f9f9"></div>
<div class="a" style="left:255px;top:404px;width:1268px;height:1px;background:#ddd"></div>
<div class="a" style="left:255px;top:436px;width:1268px;height:1px;background:#ddd"></div>
<div class="a" style="left:255px;top:468px;width:1268px;height:1px;background:#ddd"></div>
<div class="a" style="left:255px;top:500px;width:1268px;height:1px;background:#ddd"></div>
<div class="a" style="left:255px;top:404px;width:1px;height:97px;background:#ddd"></div>
<div class="a" style="left:390px;top:404px;width:1px;height:97px;background:#ddd"></div>
<div class="a" style="left:493px;top:404px;width:1px;height:97px;background:#ddd"></div>
<div class="a" style="left:722px;top:404px;width:1px;height:97px;background:#ddd"></div>
<div class="a" style="left:831px;top:404px;width:1px;height:97px;background:#ddd"></div>
<div class="a" style="left:994px;top:404px;width:1px;height:97px;background:#ddd"></div>
<div class="a" style="left:1129px;top:404px;width:1px;height:97px;background:#ddd"></div>
<div class="a" style="left:1237px;top:404px;width:1px;height:97px;background:#ddd"></div>
<div class="a" style="left:1403px;top:404px;width:1px;height:97px;background:#ddd"></div>
<div class="a" style="left:1522px;top:404px;width:1px;height:97px;background:#ddd"></div>
<svg style="left:369px;top:417px" width="7" height="9.4" viewBox="0 0 7 9.4"><path d="M0,4 L3.5,0 L7,4Z M0,5.4 L3.5,9.4 L7,5.4Z" fill="#aaa"/></svg>
<div class="t" style="left:165.3px;width:300px;text-align:center;top:409px;color:#555;font-weight:bold;transform:scaleX(0.886);transform-origin:50% 50%">User Name</div>
<svg style="left:472px;top:417px" width="7" height="9.4" viewBox="0 0 7 9.4"><path d="M0,4 L3.5,0 L7,4Z M0,5.4 L3.5,9.4 L7,5.4Z" fill="#aaa"/></svg>
<div class="t" style="left:284.3px;width:300px;text-align:center;top:409px;color:#555;font-weight:bold;transform:scaleX(0.86);transform-origin:50% 50%">State</div>
<svg style="left:701px;top:417px" width="7" height="9.4" viewBox="0 0 7 9.4"><path d="M0,4 L3.5,0 L7,4Z M0,5.4 L3.5,9.4 L7,5.4Z" fill="#aaa"/></svg>
<div class="t" style="left:450.29999999999995px;width:300px;text-align:center;top:409px;color:#555;font-weight:bold;transform:scaleX(0.888);transform-origin:50% 50%">Object Name</div>
<svg style="left:810px;top:417px" width="7" height="9.4" viewBox="0 0 7 9.4"><path d="M0,4 L3.5,0 L7,4Z M0,5.4 L3.5,9.4 L7,5.4Z" fill="#aaa"/></svg>
<div class="t" style="left:619.3px;width:300px;text-align:center;top:409px;color:#555;font-weight:bold;transform:scaleX(0.874);transform-origin:50% 50%">Time (s)</div>
<svg style="left:973px;top:417px" width="7" height="9.4" viewBox="0 0 7 9.4"><path d="M0,4 L3.5,0 L7,4Z M0,5.4 L3.5,9.4 L7,5.4Z" fill="#aaa"/></svg>
<div class="t" style="left:755.3px;width:300px;text-align:center;top:409px;color:#555;font-weight:bold;transform:scaleX(0.895);transform-origin:50% 50%">Last Action (s)</div>
<svg style="left:1108px;top:417px" width="7" height="9.4" viewBox="0 0 7 9.4"><path d="M0,4 L3.5,0 L7,4Z M0,5.4 L3.5,9.4 L7,5.4Z" fill="#aaa"/></svg>
<div class="t" style="left:904.3px;width:300px;text-align:center;top:409px;color:#555;font-weight:bold;transform:scaleX(0.879);transform-origin:50% 50%">Session (s)</div>
<svg style="left:1216px;top:417px" width="7" height="9.4" viewBox="0 0 7 9.4"><path d="M0,4 L3.5,0 L7,4Z M0,5.4 L3.5,9.4 L7,5.4Z" fill="#aaa"/></svg>
<div class="t" style="left:1025.8px;width:300px;text-align:center;top:409px;color:#555;font-weight:bold;transform:scaleX(0.9);transform-origin:50% 50%">Context</div>
<svg style="left:1382px;top:417px" width="7" height="9.4" viewBox="0 0 7 9.4"><path d="M0,4 L3.5,0 L7,4Z M0,5.4 L3.5,9.4 L7,5.4Z" fill="#aaa"/></svg>
<div class="t" style="left:1162.8px;width:300px;text-align:center;top:409px;color:#555;font-weight:bold;transform:scaleX(0.897);transform-origin:50% 50%">Info</div>
<div class="t" style="left:1313.5px;width:300px;text-align:center;top:409px;color:#555;font-weight:bold;transform:scaleX(0.895);transform-origin:50% 50%">Actions</div>
<div class="t" style="left:263px;top:441px;font-size:14px;color:#555;transform:scaleX(0.9);transform-origin:0 50%;">Admin</div>
<div class="t" style="left:398px;top:441px;font-size:14px;color:#555;transform:scaleX(0.9);transform-origin:0 50%;">Run:R</div>
<div class="t" style="left:501px;top:441px;font-size:14px;color:#555;transform:scaleX(0.9);transform-origin:0 50%;">}ElementAttributes_Version</div>
<div class="t" style="left:730px;top:441px;font-size:14px;color:#555;transform:scaleX(0.9);transform-origin:0 50%;">47</div>
<div class="t" style="left:839px;top:441px;font-size:14px;color:#555;transform:scaleX(0.9);transform-origin:0 50%;">0</div>
<div class="t" style="left:1002px;top:441px;font-size:14px;color:#555;transform:scaleX(0.9);transform-origin:0 50%;">52</div>
<div class="t" style="left:1137px;top:441px;font-size:14px;color:#555;transform:scaleX(0.9);transform-origin:0 50%;">Architect</div>
<div class="t" style="left:1245px;top:441px;font-size:14px;color:#555;transform:scaleX(0.9);transform-origin:0 50%;">-</div>
<div class="a" style="left:1425px;top:440px;width:36px;height:25px;background:#428bca;border:1px solid #357ebd;border-radius:3px"></div>
<div class="a" style="left:1465px;top:440px;width:36px;height:25px;background:#428bca;border:1px solid #357ebd;border-radius:3px"></div>
<svg style="left:1437.7px;top:446.6px" width="11.4" height="11.4" viewBox="0 0 11.4 11.4"><circle cx="5.7" cy="5.7" r="5.7" fill="#fff"/><rect x="2.6" y="5" width="6.2" height="1.5" fill="#428bca"/></svg>
<svg style="left:1476.5px;top:448px" width="12.6" height="9.2" viewBox="0 0 12.6 9.2"><path d="M3.6,.6 H1.4 Q.6,.6 .6,1.4 V7.8 Q.6,8.6 1.4,8.6 H3.6" fill="none" stroke="#fff" stroke-width="1.2"/><path d="M3.4,2.8 H7.4 V0 L12.4,4.6 L7.4,9.2 V6.4 H3.4Z" fill="#fff"/></svg>
<div class="t" style="left:263px;top:473px;font-size:14px;color:#555;transform:scaleX(0.9);transform-origin:0 50%;">Anthony Taylor</div>
<div class="t" style="left:398px;top:473px;font-size:14px;color:#555;transform:scaleX(0.9);transform-origin:0 50%;">Wait:IXCur</div>
<div class="t" style="left:501px;top:473px;font-size:14px;color:#555;transform:scaleX(0.9);transform-origin:0 50%;">Cub.GeneralLedger.Demo</div>
<div class="t" style="left:730px;top:473px;font-size:14px;color:#555;transform:scaleX(0.9);transform-origin:0 50%;">13</div>
<div class="t" style="left:839px;top:473px;font-size:14px;color:#555;transform:scaleX(0.9);transform-origin:0 50%;">0</div>
<div class="t" style="left:1002px;top:473px;font-size:14px;color:#555;transform:scaleX(0.9);transform-origin:0 50%;">25</div>
<div class="t" style="left:1137px;top:473px;font-size:14px;color:#555;transform:scaleX(0.9);transform-origin:0 50%;">Architect</div>
<div class="t" style="left:1245px;top:473px;font-size:14px;color:#555;transform:scaleX(0.9);transform-origin:0 50%;">WaitingOn (12696)</div>
<div class="a" style="left:1425px;top:472px;width:36px;height:25px;background:#428bca;border:1px solid #357ebd;border-radius:3px"></div>
<div class="a" style="left:1465px;top:472px;width:36px;height:25px;background:#428bca;border:1px solid #357ebd;border-radius:3px"></div>
<svg style="left:1437.7px;top:478.6px" width="11.4" height="11.4" viewBox="0 0 11.4 11.4"><circle cx="5.7" cy="5.7" r="5.7" fill="#fff"/><rect x="2.6" y="5" width="6.2" height="1.5" fill="#428bca"/></svg>
<svg style="left:1476.5px;top:480px" width="12.6" height="9.2" viewBox="0 0 12.6 9.2"><path d="M3.6,.6 H1.4 Q.6,.6 .6,1.4 V7.8 Q.6,8.6 1.4,8.6 H3.6" fill="none" stroke="#fff" stroke-width="1.2"/><path d="M3.4,2.8 H7.4 V0 L12.4,4.6 L7.4,9.2 V6.4 H3.4Z" fill="#fff"/></svg>
<div class="a" style="left:240px;top:582px;width:1298px;height:240px;border:1px solid #ddd;border-radius:4px;background:#fff;overflow:hidden"><div class="a" style="left:0;top:0;width:1296px;height:36px;background:#f5f5f5;border-bottom:1px solid #ddd"></div></div>
<svg style="left:256.3px;top:593.7px" width="13.7" height="10.2" viewBox="0 0 13.7 10.2"><path d="M0,0 H13.7 V1.7 H0Z M0,2.85 H13.7 V4.55 H0Z M0,5.7 H13.7 V7.4 H0Z M0,8.5 H13.7 V10.2 H0Z" fill="#333"/></svg>
<div class="t" style="left:275px;top:589px;font-size:14px;color:#333;transform:scaleX(0.89);transform-origin:0 50%;">Message Log</div>
<div class="a" style="left:255px;top:632px;width:1268px;height:31px;border:1px solid #ccc;border-radius:4px;background:#fff;box-shadow:inset 0 1px 1px rgba(0,0,0,.075)"></div>
<div class="t" style="left:266.5px;top:637px;font-size:14px;color:#999;transform:scaleX(0.889);transform-origin:0 50%;">Filter message...</div>
<div class="a" style="left:255px;top:676px;width:1268px;height:28px;border:1px solid #ccc;border-radius:4px;background:#fff;box-shadow:inset 0 1px 1px rgba(0,0,0,.075)"></div>
<div class="t" style="left:266.3px;top:678px;font-size:14px;color:#333;transform:scaleX(0.888);transform-origin:0 50%;">Filtered Log Level...</div>
<div class="a" style="left:255px;top:749px;width:1268px;height:70px;background:#fcf8e3"></div>
<div class="a" style="left:255px;top:717px;width:1268px;height:1px;background:#ddd"></div>
<div class="a" style="left:255px;top:749px;width:1268px;height:1px;background:#ddd"></div>
<div class="a" style="left:255px;top:781px;width:1268px;height:1px;background:#ddd"></div>
<div class="a" style="left:255px;top:717px;width:1px;height:100px;background:#ddd"></div>
<div class="a" style="left:313px;top:717px;width:1px;height:100px;background:#ddd"></div>
<div class="a" style="left:406px;top:717px;width:1px;height:100px;background:#ddd"></div>
<div class="a" style="left:479px;top:717px;width:1px;height:100px;background:#ddd"></div>
<div class="a" style="left:1522px;top:717px;width:1px;height:100px;background:#ddd"></div>
<div class="t" style="left:263px;top:722px;font-size:14px;color:#555;font-weight:bold;transform:scaleX(0.885);transform-origin:0 50%;">#</div>
<div class="t" style="left:321px;top:722px;font-size:14px;color:#555;font-weight:bold;transform:scaleX(0.885);transform-origin:0 50%;">User Name</div>
<div class="t" style="left:414px;top:722px;font-size:14px;color:#555;font-weight:bold;transform:scaleX(0.885);transform-origin:0 50%;">Time</div>
<div class="t" style="left:487px;top:722px;font-size:14px;color:#555;font-weight:bold;transform:scaleX(0.885);transform-origin:0 50%;">Message</div>
<div class="t" style="left:263px;top:754px;font-size:14px;color:#555;transform:scaleX(0.899);transform-origin:0 50%;">12696</div>
<div class="t" style="left:321px;top:754px;font-size:14px;color:#555;transform:scaleX(0.899);transform-origin:0 50%;">Admin</div>
<div class="t" style="left:414px;top:754px;font-size:14px;color:#555;transform:scaleX(0.899);transform-origin:0 50%;">11:43:10</div>
<div class="t" style="left:487px;top:754px;font-size:14px;color:#555;transform:scaleX(0.899);transform-origin:0 50%;">Process "Bedrock.Cube.Data.Clear": finished executing normally, elapsed time 17.19 seconds</div>
<div class="t" style="left:263px;top:786px;font-size:14px;color:#555;transform:scaleX(0.899);transform-origin:0 50%;">12696</div>
<div class="t" style="left:321px;top:786px;font-size:14px;color:#555;transform:scaleX(0.899);transform-origin:0 50%;">Admin</div>
<div class="t" style="left:414px;top:786px;font-size:14px;color:#555;transform:scaleX(0.899);transform-origin:0 50%;">11:43:10</div>
<div class="t" style="left:487px;top:786px;font-size:14px;color:#555;transform:scaleX(0.899);transform-origin:0 50%;">Process "Bedrock.Cube.ViewAndSubsets.Delete": finished executing normally, elapsed time 0.00 seconds</div>
</body></html>
